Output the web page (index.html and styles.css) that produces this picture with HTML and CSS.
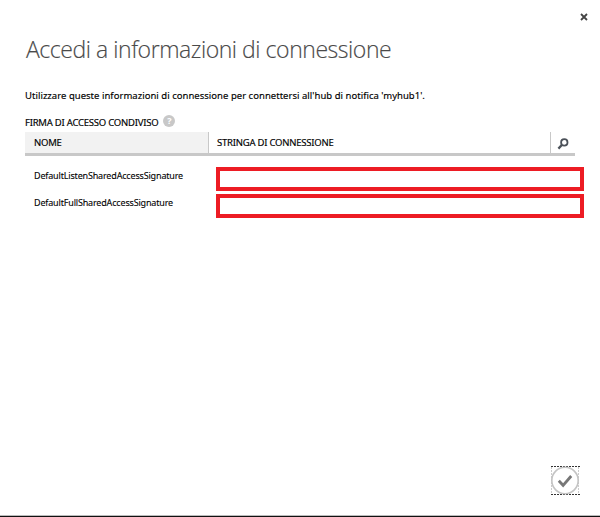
FILE: index.html
```html
<!DOCTYPE html>
<html lang="it">
<head>
<meta charset="utf-8">
<title>Accedi a informazioni di connessione</title>
<link rel="stylesheet" href="styles.css">
</head>
<body>
<main class="dialog">
  <div class="topbar">
    <svg class="close" viewBox="0 0 8 8"><path d="M1 1 7 7M7 1 1 7"/></svg>
  </div>
  <h1 class="title">Accedi a informazioni di connessione</h1>
  <p class="intro">Utilizzare queste informazioni di connessione per connettersi all'hub di notifica 'myhub1'.</p>
  <div class="section"><span class="label">FIRMA DI ACCESSO CONDIVISO</span><span class="help">?</span></div>
  <div class="head">
    <div class="name-col">NOME</div>
    <div class="value-col">STRINGA DI CONNESSIONE</div>
    <div class="search">
      <svg viewBox="0 0 12 12"><circle cx="7.3" cy="4.4" r="3.2"/><path class="handle" d="M4.8 7 1.4 10.6"/></svg>
    </div>
  </div>
  <div class="rows">
    <div class="row"><span class="key">DefaultListenSharedAccessSignature</span><div class="value"></div></div>
    <div class="row"><span class="key">DefaultFullSharedAccessSignature</span><div class="value"></div></div>
  </div>
  <div class="footer">
    <div class="ok">
      <svg viewBox="0 0 30 30">
        <path class="focus-side" d="M1.5 1V29M28.5 1V29"/>
        <path class="focus" d="M1 .5H30M1 28.5H30"/>
        <circle cx="15" cy="14.5" r="13.2"/>
        <path class="check" d="M8.8 14.8 13.1 19.3 21.2 10"/>
      </svg>
    </div>
  </div>
</main>
</body>
</html>
```
FILE: styles.css
```css
* { box-sizing: border-box; }
body { margin: 0; background: #fff; color: #000; font: 9.5px/14px "Noto Sans", "Open Sans", sans-serif; }
.dialog { height: 517px; display: flex; flex-direction: column; border-bottom: 1px solid #111; box-shadow: inset 0 -1px #bbb; white-space: nowrap; }
.topbar { height: 32px; padding: 13px 12px 0 0; display: flex; justify-content: flex-end; }
.close { width: 8px; height: 8px; fill: none; stroke: #444; stroke-width: 1.8; }
.title { margin: 0; height: 57px; padding-left: 26px; font: 300 23px/34px "Open Sans", "Noto Sans", sans-serif; color: #4a4a4a; letter-spacing: -.45px; -webkit-text-stroke: .15px #4a4a4a; }
.intro { margin: 0; height: 25px; padding-left: 25px; letter-spacing: .03px; -webkit-text-stroke: .15px #000; }
.section { height: 18px; padding-left: 25px; display: flex; gap: 5px; }
.label { line-height: 17px; letter-spacing: -.23px; -webkit-text-stroke: .15px #000; }
.help { width: 12px; height: 12px; margin-top: 1px; border-radius: 50%; background: #c8c8c8; color: #fff; font: bold 9px/12px "Noto Sans", sans-serif; text-align: center; }
.head { width: 550px; height: 24px; margin-left: 25px; display: flex; border-bottom: 3px solid #c8c8c8; line-height: 21px; letter-spacing: -.22px; -webkit-text-stroke: .15px #000; }
.name-col { width: 184px; padding-left: 9px; background: #f2f2f2; border-right: 1px solid #c8c8c8; }
.value-col { width: 341px; padding-left: 8px; }
.search { width: 25px; padding: 6px 0 0 6px; border-left: 1px solid #c8c8c8; }
.search svg { display: block; width: 12px; height: 12px; fill: none; stroke: #4b5159; stroke-width: 1.8; }
.search .handle { stroke-width: 2.3; }
.rows { padding: 11px 16px 0 34px; display: flex; flex-direction: column; gap: 3px; }
.row { height: 24px; display: flex; }
.key { width: 182px; font-size: 9px; line-height: 18px; letter-spacing: -.17px; -webkit-text-stroke: .1px #000; }
.value { width: 368px; border: 4px solid #ed1c24; }
.footer { margin-top: auto; padding: 0 20px 20px 0; display: flex; justify-content: flex-end; }
.ok, .ok svg { display: block; width: 30px; height: 30px; }
.ok svg { fill: none; }
.ok circle { stroke: #c4c4c4; stroke-width: 1.6; }
.focus { stroke: #333; stroke-width: 1; stroke-dasharray: 2 1; }
.focus-side { stroke: #ccc; stroke-width: 1; stroke-dasharray: 2 1; }
.ok .check { stroke: #777; stroke-width: 2.8; }
```
